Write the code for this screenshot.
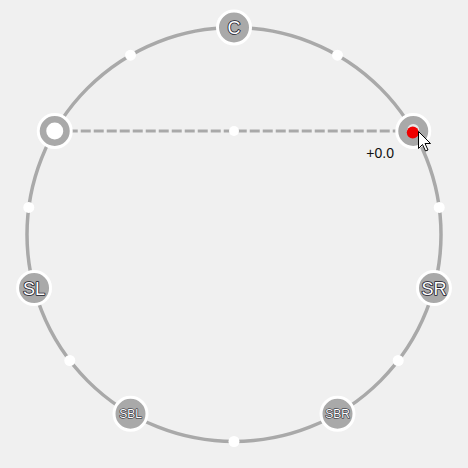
import React from "react";

const CX = 234;
const CY = 234.5;
const R = 207;

function pos(deg) {
  const a = (deg * Math.PI) / 180;
  return [CX + R * Math.sin(a), CY - R * Math.cos(a)];
}

const speakers = [
  { label: "C", deg: 0, size: 18 },
  { label: "SL", deg: -105, size: 18 },
  { label: "SR", deg: 105, size: 18 },
  { label: "SBL", deg: -150, size: 12 },
  { label: "SBR", deg: 150, size: 12 },
];

const dots = [-30, 30, -82.5, 82.5, -127.5, 127.5, 180];

export default function App() {
  const [lx, ly] = pos(-60);
  const [rx, ry] = pos(60);
  return (
    <div className="w-[468px] h-[468px] bg-[#f0f0f0] overflow-hidden">
      <svg width="468" height="468" viewBox="0 0 468 468" className="block">
        <circle cx={CX} cy={CY} r={R} fill="none" stroke="#a9a9a9" strokeWidth="3.5" />
        <line x1={lx} y1={ly} x2={rx} y2={ry} stroke="#a9a9a9" strokeWidth="3" strokeDasharray="10 3" />
        <circle cx={(lx + rx) / 2} cy={ly} r="5" fill="#fff" />
        {dots.map((d) => {
          const [x, y] = pos(d);
          return <circle key={d} cx={x} cy={y} r="5.5" fill="#fff" />;
        })}
        {speakers.map((s) => {
          const [x, y] = pos(s.deg);
          return (
            <g key={s.label}>
              <circle cx={x} cy={y} r="16.5" fill="#a9a9a9" stroke="#fff" strokeWidth="3" />
              <text
                x={x}
                y={y + s.size * 0.36}
                textAnchor="middle"
                fontFamily="'Liberation Sans', Arial, sans-serif"
                fontSize={s.size}
                fill="#fff"
                stroke="#1a1a2a"
                strokeWidth={s.size > 14 ? 1.6 : 1.2}
                paintOrder="stroke"
                strokeLinejoin="round"
              >
                {s.label}
              </text>
            </g>
          );
        })}
        {/* L node (ring) */}
        <circle cx={lx} cy={ly} r="16.5" fill="#a9a9a9" stroke="#fff" strokeWidth="3" />
        <circle cx={lx} cy={ly} r="8.5" fill="#fff" />
        {/* R node */}
        <circle cx={rx} cy={ry} r="16.5" fill="#a9a9a9" stroke="#fff" strokeWidth="3" />
        <circle cx={rx} cy={ry - 1} r="6" fill="#e8e8e8" />
        <circle cx={rx - 0.5} cy={ry + 1.5} r="6" fill="#f00000" />
        <text
          x="394"
          y="157.5"
          textAnchor="end"
          fontFamily="'Liberation Sans', Arial, sans-serif"
          fontSize="14"
          fill="#111"
        >
          +0.0
        </text>
        {/* cursor */}
        <path
          d="M418.5 131.5 L418.5 148.5 L422.5 144.5 L425.5 151 L428 150 L425 143.5 L430.5 143.5 Z"
          fill="#fff"
          stroke="#000"
          strokeWidth="1"
          strokeLinejoin="miter"
        />
      </svg>
    </div>
  );
}
